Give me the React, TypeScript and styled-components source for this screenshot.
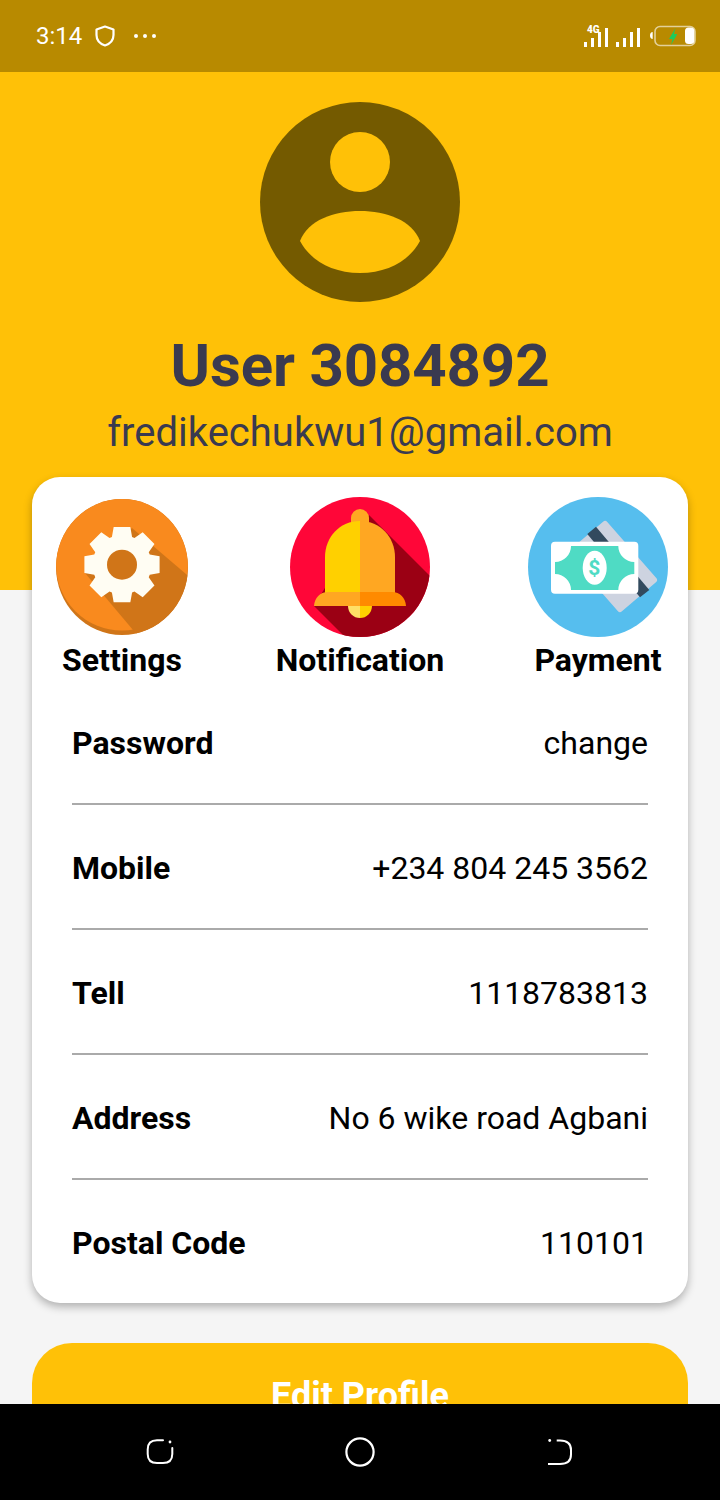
import React from "react";
import styled, { createGlobalStyle } from "styled-components";

const Global = createGlobalStyle`
  html, body { margin: 0; padding: 0; background: #f5f5f5; }
  * { box-sizing: border-box; }
`;

const Screen = styled.div`
  width: 720px;
  height: 1500px;
  display: flex;
  flex-direction: column;
  overflow: hidden;
  background: #f5f5f5;
  font-family: Roboto, "Liberation Sans", sans-serif;
`;

const StatusBar = styled.div`
  height: 72px;
  flex: none;
  background: #b88a00;
  display: flex;
  align-items: center;
  justify-content: space-between;
  padding: 0 24px 0 36px;
  color: #fff;
`;
const StatusGroup = styled.div`
  display: flex;
  align-items: center;
`;
const StatusIcons = styled(StatusGroup)`
  gap: 9px;
`;
const Clock = styled.span`
  font-size: 24px;
  line-height: 28px;
  margin-right: 13px;
`;
const Dots = styled.svg`
  margin-left: 19px;
`;

const Scroll = styled.div`
  flex: 1;
  min-height: 0;
  overflow: hidden;
`;
const Header = styled.header`
  height: 518px;
  background: #ffc107;
  padding-top: 30px;
  display: flex;
  flex-direction: column;
  align-items: center;
`;
const UserName = styled.h1`
  margin: 29px 0 0;
  font-size: 60px;
  line-height: 70px;
  font-weight: 700;
  letter-spacing: -0.15px;
  color: #3a3a50;
`;
const Email = styled.div`
  margin-top: 8px;
  font-size: 40px;
  line-height: 47px;
  color: #3a3a50;
`;

const Card = styled.section`
  margin: -113px 32px 0;
  height: 826px;
  position: relative;
  background: #fff;
  border-radius: 28px;
  box-shadow: 0 4px 8px rgba(0, 0, 0, 0.28);
  padding-top: 20px;
`;
const Shortcuts = styled.div`
  display: grid;
  grid-template-columns: 180px 1fr 180px;
  height: 183px;
`;
const Shortcut = styled.div`
  display: flex;
  flex-direction: column;
  align-items: center;
`;
const ShortcutIcon = styled.div`
  height: 140px;
  display: flex;
  align-items: center;
`;
const ShortcutLabel = styled.div`
  margin-top: 4px;
  font-size: 32px;
  line-height: 38px;
  font-weight: 700;
  color: #000;
`;
const Row = styled.div`
  margin: 0 40px;
  height: 125px;
  padding-top: 44px;
  display: flex;
  justify-content: space-between;
  font-size: 32px;
  line-height: 38px;
  color: #000;
  border-bottom: 2px solid #aaa;
  &:last-child { border-bottom: 0; height: 123px; }
`;
const RowLabel = styled.span`
  font-weight: 700;
`;

const EditButton = styled.button`
  display: block;
  width: 656px;
  height: 100px;
  margin: 40px 32px 0;
  padding: 6px 0 0;
  border: 0;
  border-radius: 40px;
  background: #ffc107;
  color: #fff;
  font-family: inherit;
  font-size: 36px;
  line-height: 42px;
  font-weight: 700;
`;

const NavBar = styled.nav`
  height: 96px;
  flex: none;
  background: #000;
  padding: 0 60px;
  display: grid;
  grid-template-columns: repeat(3, 1fr);
  align-items: center;
  justify-items: center;
`;

const ShieldIcon = () => (
  <svg width="20" height="22" viewBox="0 0 20 22" fill="none">
    <path d="M10 1.5 L18.5 4.5 V10 C18.5 15 15 18.8 10 20.5 C5 18.8 1.5 15 1.5 10 V4.5 Z" stroke="#fff" strokeWidth="2.2" strokeLinejoin="round" />
  </svg>
);

const SignalIcon = () => (
  <svg width="56" height="22" viewBox="0 0 56 22" fill="#fff">
    <rect x="0" y="17" width="3" height="5" />
    <rect x="7" y="13" width="3" height="9" />
    <rect x="14" y="7" width="3" height="15" />
    <rect x="21" y="3" width="3" height="19" />
    <rect x="32" y="17" width="3" height="5" />
    <rect x="39" y="13" width="3" height="9" />
    <rect x="46" y="7" width="3" height="15" />
    <rect x="53" y="3" width="3" height="19" />
    <text x="3" y="7.5" fontFamily="Roboto, sans-serif" fontSize="10" fontWeight="900" fill="#fff">4G</text>
  </svg>
);

const BatteryIcon = () => (
  <svg width="47" height="22" viewBox="0 0 47 22" fill="none">
    <path d="M3.7 7 V14 C2 14 1 12.5 1 10.5 C1 8.5 2 7 3.7 7 Z" fill="#fff" />
    <rect x="6" y="1.5" width="40" height="19" rx="5" stroke="#fff" strokeOpacity="0.6" strokeWidth="1.6" />
    <polygon points="26.5,3 20,14 23.5,14 22,20 28.3,9 25,9" fill="#1ecb5c" />
    <rect x="36" y="2.5" width="9.3" height="16.5" rx="3.5" fill="#fff" />
  </svg>
);

const Avatar = () => (
  <svg width="200" height="200" viewBox="0 0 200 200">
    <circle cx="100" cy="100" r="100" fill="#745a00" />
    <circle cx="100" cy="60" r="30" fill="#ffc107" />
    <path d="M40 139 C48 118 74 109 100 109 S152 118 160 139 C150 158 128 171 100 171 S50 158 40 139 Z" fill="#ffc107" />
  </svg>
);

function gearPath(cx: number, cy: number) {
  const pts: string[] = [];
  const pt = (r: number, deg: number) => {
    const a = ((deg - 90) * Math.PI) / 180;
    return `${(cx + r * Math.cos(a)).toFixed(2)} ${(cy + r * Math.sin(a)).toFixed(2)}`;
  };
  for (let i = 0; i < 8; i++) {
    const c = i * 45;
    pts.push(pt(29.5, c - 20), pt(38.5, c - 12.5), pt(38.5, c + 12.5), pt(29.5, c + 20));
  }
  return `M${pts.join(" L")} Z`;
}

const SettingsIcon = () => (
  <svg width="132" height="136" viewBox="0 0 132 136">
    <defs>
      <clipPath id="settingsClip">
        <ellipse cx="66" cy="68" rx="66" ry="68" />
      </clipPath>
    </defs>
    <ellipse cx="66" cy="68" rx="66" ry="68" fill="#d07518" />
    <circle cx="66" cy="65.5" r="66" fill="#f98a1e" clipPath="url(#settingsClip)" />
    <polygon points="76,29 150,92 150,150 93,150 29,74" fill="#d07518" clipPath="url(#settingsClip)" />
    <path d={gearPath(66, 65.7)} fill="#fffdf3" />
    <circle cx="66" cy="65.7" r="15" fill="#d07518" />
  </svg>
);

const BellIcon = () => (
  <svg width="140" height="140" viewBox="0 0 140 140">
    <defs>
      <clipPath id="bellClip">
        <circle cx="70" cy="70" r="70" />
      </clipPath>
    </defs>
    <circle cx="70" cy="70" r="70" fill="#ff0638" />
    <polygon points="79,18 160,99 160,160 75,160 24,109" fill="#9b0014" clipPath="url(#bellClip)" />
    <path d="M61 26 V21 A9 9 0 0 1 79 21 V26 Z" fill="#ffa722" />
    <path d="M70 24 C50 24 35 40 35 60 V96 H70 Z" fill="#ffd000" />
    <path d="M70 24 C90 24 105 40 105 60 V96 H70 Z" fill="#ffa722" />
    <path d="M58 109 A12 12 0 0 0 70 121 V109 Z" fill="#ffe066" />
    <path d="M82 109 A12 12 0 0 1 70 121 V109 Z" fill="#ffd000" />
    <path d="M24 109 C24.5 101 30 95 38 95 H70 V109 Z" fill="#ffa722" />
    <path d="M116 109 C115.5 101 110 95 102 95 H70 V109 Z" fill="#ff8a00" />
  </svg>
);

const PaymentIcon = () => (
  <svg width="140" height="140" viewBox="0 0 140 140">
    <circle cx="70" cy="70" r="70" fill="#56beee" />
    <polygon points="77,27 126,83 92,112 43,56" fill="#cdd3e0" stroke="#cdd3e0" strokeWidth="6" strokeLinejoin="round" />
    <polygon points="59.3,37 68,29.7 121.3,93 112,100.3" fill="#324a5e" />
    <rect x="23" y="44.7" width="87.3" height="52" rx="4" fill="#fff" />
    <path d="M43 49 H90.3 A16 16 0 0 0 106.3 65 V77 A16 16 0 0 0 90.3 93 H43 A16 16 0 0 0 27 77 V65 A16 16 0 0 0 43 49 Z" fill="#4fdbc4" />
    <ellipse cx="66.7" cy="70.7" rx="12" ry="17" fill="#fff" />
    <text x="66.4" y="78" textAnchor="middle" fontFamily="Roboto, sans-serif" fontSize="21" fontWeight="700" fill="#4fdbc4">$</text>
  </svg>
);

const RecentIcon = () => (
  <svg width="30" height="30" viewBox="0 0 30 30" fill="none" stroke="#fff" strokeWidth="2" strokeLinecap="round">
    <path d="M18 3.3 H12 C6 3.3 2.7 6.6 2.7 12.5 V17 C2.7 22.8 6 26 12 26 H18 C24 26 27.3 22.8 27.3 17 V11" />
    <circle cx="25" cy="5" r="1.4" fill="#fff" stroke="none" />
  </svg>
);
const HomeIcon = () => (
  <svg width="30" height="30" viewBox="0 0 30 30" fill="none" stroke="#fff" strokeWidth="2.2">
    <circle cx="15" cy="15" r="13.6" />
  </svg>
);
const BackIcon = () => (
  <svg width="30" height="30" viewBox="0 0 30 30" fill="none" stroke="#fff" strokeWidth="2">
    <path d="M11.7 3.5 H15 C22 3.5 26 7 26 13 V17.5 C26 23.5 22 27 15 27 H3" />
    <circle cx="4.7" cy="3.5" r="1.4" fill="#fff" stroke="none" />
  </svg>
);

const rows: [string, string][] = [
  ["Password", "change"],
  ["Mobile", "+234 804 245 3562"],
  ["Tell", "1118783813"],
  ["Address", "No 6 wike road Agbani"],
  ["Postal Code", "110101"],
];

export default function App() {
  return (
    <Screen>
      <Global />
      <StatusBar>
        <StatusGroup>
          <Clock>3:14</Clock>
          <ShieldIcon />
          <Dots width="22" height="4" viewBox="0 0 22 4" fill="#fff">
            <circle cx="2" cy="2" r="2" />
            <circle cx="11" cy="2" r="2" />
            <circle cx="20" cy="2" r="2" />
          </Dots>
        </StatusGroup>
        <StatusIcons>
          <SignalIcon />
          <BatteryIcon />
        </StatusIcons>
      </StatusBar>
      <Scroll>
        <Header>
          <Avatar />
          <UserName>User 3084892</UserName>
          <Email>fredikechukwu1@gmail.com</Email>
        </Header>
        <Card>
          <Shortcuts>
            <Shortcut>
              <ShortcutIcon><SettingsIcon /></ShortcutIcon>
              <ShortcutLabel>Settings</ShortcutLabel>
            </Shortcut>
            <Shortcut>
              <ShortcutIcon><BellIcon /></ShortcutIcon>
              <ShortcutLabel>Notification</ShortcutLabel>
            </Shortcut>
            <Shortcut>
              <ShortcutIcon><PaymentIcon /></ShortcutIcon>
              <ShortcutLabel>Payment</ShortcutLabel>
            </Shortcut>
          </Shortcuts>
          {rows.map(([label, value]) => (
            <Row key={label}>
              <RowLabel>{label}</RowLabel>
              <span>{value}</span>
            </Row>
          ))}
        </Card>
        <EditButton>Edit Profile</EditButton>
      </Scroll>
      <NavBar>
        <RecentIcon />
        <HomeIcon />
        <BackIcon />
      </NavBar>
    </Screen>
  );
}
